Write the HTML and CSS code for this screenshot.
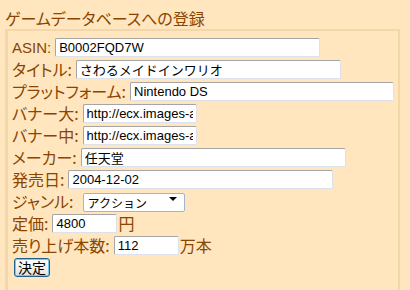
FILE: index.html
```html
<!DOCTYPE html>
<html lang="ja">
<head>
  <meta charset="UTF-8">
  <title>ゲームデータベースへの登録</title>
  <link rel="stylesheet" href="styles.css">
</head>
<body>
  <h2 class="title">ゲームデータベースへの登録</h2>
  <form class="box" autocomplete="off">
    <div class="row"><label class="lbl latin">ASIN:</label><input class="field" type="text" value="B0002FQD7W"></div>
    <div class="row"><label class="lbl">タイトル:</label><input class="field" type="text" value="さわるメイドインワリオ"></div>
    <div class="row"><label class="lbl">プラットフォーム:</label><input class="field" type="text" value="Nintendo DS"></div>
    <div class="row"><label class="lbl">バナー大:</label><input class="field short" type="text" value="http://ecx.images-amazon.com/images/P/B0002FQD7W.09.LZZZZZZZ.jpg"></div>
    <div class="row"><label class="lbl">バナー中:</label><input class="field short" type="text" value="http://ecx.images-amazon.com/images/P/B0002FQD7W.09.MZZZZZZZ.jpg"></div>
    <div class="row"><label class="lbl">メーカー:</label><input class="field" type="text" value="任天堂"></div>
    <div class="row"><label class="lbl">発売日:</label><input class="field" type="text" value="2004-12-02"></div>
    <div class="row"><label class="lbl">ジャンル:</label>
      <span class="select-wrap">
        <select class="select">
          <option>アクション</option>
          <option>パズル</option>
          <option>RPG</option>
        </select>
      </span>
    </div>
    <div class="row"><label class="lbl">定価:</label><input class="field num" type="text" value="4800"><span class="unit">円</span></div>
    <div class="row"><label class="lbl">売り上げ本数:</label><input class="field num" type="text" value="112"><span class="unit">万本</span></div>
    <div class="row"><button type="submit" class="submit-btn">決定</button></div>
  </form>
</body>
</html>
```

FILE: styles.css
```css
body {
  margin: 0;
  background: #ffe6bf;
  color: #8a4500;
  font-family: "Noto Sans CJK JP", "Liberation Sans", sans-serif;
  overflow: hidden;
}
.title {
  margin: 0;
  padding: 7px 0 0 5px;
  height: 22px;
  line-height: 22px;
  font-size: 16px;
  font-weight: normal;
  font-feature-settings: "palt";
}
.box {
  margin: 0 10px 0 5px;
  border: 2px solid #f3d7a8;
  border-left-width: 3px;
  padding: 5px 4px 40px 4px;
}
.row {
  display: flex;
  align-items: center;
  height: 22px;
  gap: 3px;
}
.lbl {
  font-size: 16px;
  font-feature-settings: "palt";
  line-height: 19px;
  white-space: nowrap;
}
.lbl::after {
  content: "";
  margin-right: 1px;
}
.lbl.latin {
  font-family: "Liberation Sans", sans-serif;
  font-size: 15px;
}
.field {
  box-sizing: border-box;
  width: 265px;
  height: 19px;
  padding: 0 3px;
  border: 1px solid;
  border-color: #a5a5a5 #dce1ea #dce1ea #a5a5a5;
  border-radius: 2px;
  background: #fff;
  color: #000;
  font-family: "Liberation Sans", "Noto Sans CJK JP", sans-serif;
  font-size: 13px;
  outline: none;
}
.field.short {
  width: 114px;
}
.field.num {
  width: 65px;
}
.unit {
  font-size: 16px;
  line-height: 19px;
  margin-left: -2px;
}
.select-wrap {
  position: relative;
  display: inline-block;
  margin-left: 5px;
}
.select {
  box-sizing: border-box;
  width: 102px;
  height: 19px;
  padding: 0 4px;
  appearance: none;
  -webkit-appearance: none;
  border: 1px solid #a5b4cc;
  border-radius: 2px;
  background: #fff;
  color: #000;
  font-family: "Noto Sans CJK JP", sans-serif;
  font-size: 12px;
}
.select-wrap::after {
  content: "";
  position: absolute;
  right: 8px;
  top: 8px;
  border-left: 4px solid transparent;
  border-right: 4px solid transparent;
  border-top: 4px solid #000;
  pointer-events: none;
}
.submit-btn {
  box-sizing: border-box;
  width: 36px;
  height: 19px;
  margin: 0 0 0 2px;
  padding: 0;
  border: 1px solid #1f5f8c;
  border-radius: 3px;
  box-shadow: inset 0 0 0 1px #74c9f0;
  background: linear-gradient(#ffffff, #e4e4dc);
  color: #000;
  font-family: "Noto Sans CJK JP", sans-serif;
  font-size: 14px;
  line-height: 16px;
  cursor: pointer;
}
```
